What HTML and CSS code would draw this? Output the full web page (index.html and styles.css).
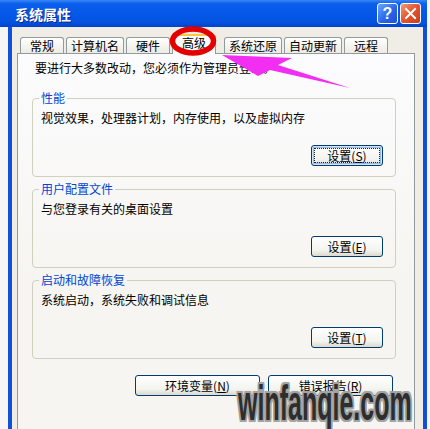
FILE: index.html
```html
<!DOCTYPE html>
<html lang="zh-CN">
<head>
  <meta charset="UTF-8" />
  <title>系统属性</title>
  <link rel="stylesheet" href="styles.css">
</head>
<body>
  <div class="window">
    <div class="titlebar">
      <span class="title">系统属性</span>
      <div class="title-buttons">
        <span class="tb-btn help">?</span>
        <span class="tb-btn close">
          <svg width="13" height="13" viewBox="0 0 13 13">
            <path d="M2 2 L11 11 M11 2 L2 11" stroke="#fff" stroke-width="2" stroke-linecap="square" />
          </svg>
        </span>
      </div>
    </div>

    <div class="frame">
      <ul class="tabs">
        <li class="tab">常规</li>
        <li class="tab">计算机名</li>
        <li class="tab">硬件</li>
        <li class="tab active">高级</li>
        <li class="tab">系统还原</li>
        <li class="tab">自动更新</li>
        <li class="tab">远程</li>
      </ul>

      <div class="panel">
        <p class="intro">要进行大多数改动，您必须作为管理员登录。</p>

        <fieldset class="group">
          <legend>性能</legend>
          <p class="group-desc">视觉效果，处理器计划，内存使用，以及虚拟内存</p>
          <div class="group-actions">
            <button class="btn default">设置(<u>S</u>)</button>
          </div>
        </fieldset>

        <fieldset class="group">
          <legend>用户配置文件</legend>
          <p class="group-desc">与您登录有关的桌面设置</p>
          <div class="group-actions">
            <button class="btn">设置(<u>E</u>)</button>
          </div>
        </fieldset>

        <fieldset class="group">
          <legend>启动和故障恢复</legend>
          <p class="group-desc">系统启动，系统失败和调试信息</p>
          <div class="group-actions">
            <button class="btn">设置(<u>T</u>)</button>
          </div>
        </fieldset>

        <div class="dialog-actions">
          <button class="btn wide">环境变量(<u>N</u>)</button>
          <button class="btn wide">错误报告(<u>R</u>)</button>
        </div>
      </div>
    </div>
  </div>

  <!-- markup drawn over the screenshot -->
  <svg class="markup" width="430" height="429" viewBox="0 0 430 429">
    <ellipse cx="193" cy="41" rx="20.5" ry="12" fill="none" stroke="#e30000" stroke-width="5.5" />
    <polygon points="222,55 292,58 278,65 350,88 270,70 258,76" fill="#f22ef2" />
  </svg>

  <div class="watermark">winfanqie.com</div>
</body>
</html>
```

FILE: styles.css
```css
* {
  box-sizing: border-box;
}

body {
  margin: 0;
  width: 430px;
  height: 429px;
  overflow: hidden;
  position: relative;
  background: #f6f6f6;
  font-family: "Noto Sans CJK SC", "Liberation Sans", sans-serif;
  font-size: 12px;
  color: #000;
}

.window {
  width: 427px;
}

/* XP luna title bar */
.titlebar {
  height: 27px;
  display: flex;
  align-items: center;
  justify-content: space-between;
  padding: 0 6px 0 15px;
  background: linear-gradient(#3a86f7 0%, #0a5fea 14%, #0558e8 50%, #0453e0 82%, #0343cc 100%);
}

.title {
  color: #fff;
  font-weight: bold;
  font-size: 14px;
  line-height: 16px;
  text-shadow: 1px 1px 0 #0b2590;
}

.title-buttons {
  display: flex;
  gap: 2px;
}

.tb-btn {
  width: 21px;
  height: 21px;
  border: 1px solid #fff;
  border-radius: 3px;
  display: flex;
  align-items: center;
  justify-content: center;
}

.help {
  background: linear-gradient(135deg, #6aa6ff, #2b66e8 55%, #1c4fd2);
  color: #fff;
  font: bold 16px "Liberation Sans", sans-serif;
}

.close {
  background: linear-gradient(135deg, #f29a74, #e2542c 50%, #c63f1b);
}

/* window body */
.frame {
  margin-left: 8px;
  height: 402px;
  padding-top: 7px;
  border-left: 4px solid #1250da;
  border-right: 4px solid #1250da;
  background: #efede5;
}

.tabs {
  display: flex;
  align-items: flex-end;
  gap: 2px;
  height: 19px;
  margin: 0;
  padding: 0 0 0 8px;
  list-style: none;
  position: relative;
  z-index: 1;
}

.tab {
  height: 16px;
  min-width: 44px;
  padding: 0 4px;
  border: 1px solid #919b9c;
  border-bottom: none;
  border-radius: 3px 3px 0 0;
  background: linear-gradient(#ffffff, #ecebe5);
  line-height: 15px;
  text-align: center;
}

.tab.active {
  height: 20px;
  min-width: 44px;
  margin-right: 6px;
  margin-bottom: -1px;
  border-top: 2px solid #ffc73c;
  background: #fcfcfe;
  line-height: 14px;
}

.panel {
  margin-left: 5px;
  width: 398px;
  height: 380px;
  padding: 7px 18px 0 14px;
  border: 1px solid #919b9c;
  background: linear-gradient(#fcfcfe, #f6f5f1 60%);
}

.intro {
  margin: 0 0 16px 3px;
  line-height: 14px;
}

.group {
  margin: 0;
  padding: 6px 12px 10px 8px;
  border: 1px solid #d0d0bf;
  border-radius: 4px;
}

.group + .group {
  margin-top: 5px;
}

.group legend {
  margin-left: -2px;
  padding: 0 2px;
  line-height: 14px;
  color: #0046d5;
}

.group-desc {
  margin: 0;
  line-height: 14px;
}

.group-actions {
  display: flex;
  justify-content: flex-end;
  margin-top: 20px;
}

.btn {
  width: 72px;
  height: 21px;
  padding: 0;
  border: 1px solid #003c74;
  border-radius: 3px;
  background: linear-gradient(#ffffff, #f3f3ef 70%, #dcd8cc);
  font: 12px "Noto Sans CJK SC", sans-serif;
  line-height: 19px;
  color: #000;
  text-align: center;
}

.btn.wide {
  width: 125px;
}

.btn.default {
  box-shadow: inset 0 0 0 1px #cee7ff, inset 0 0 0 2px #98b8ea;
  outline: 1px dotted #222;
  outline-offset: -4px;
}

.dialog-actions {
  display: flex;
  justify-content: flex-end;
  gap: 8px;
  margin-top: 16px;
  padding-right: 3px;
}

/* red circle + arrow and site stamp on top */
.markup {
  position: absolute;
  top: 0;
  left: 0;
  z-index: 2;
  pointer-events: none;
}

.watermark {
  position: absolute;
  left: 238px;
  top: 375px;
  z-index: 3;
  font: bold 50px "Liberation Sans", sans-serif;
  line-height: 56px;
  color: #2e2e2e;
  white-space: nowrap;
  transform: scaleX(0.5);
  transform-origin: left top;
  text-shadow: 3px 0 #a3a3a3, -3px 0 #a3a3a3, 0 2px #a3a3a3, 0 -2px #a3a3a3,
    3px 2px #a3a3a3, -3px -2px #a3a3a3, 3px -2px #a3a3a3, -3px 2px #a3a3a3,
    0 0 5px #fff;
}
```
